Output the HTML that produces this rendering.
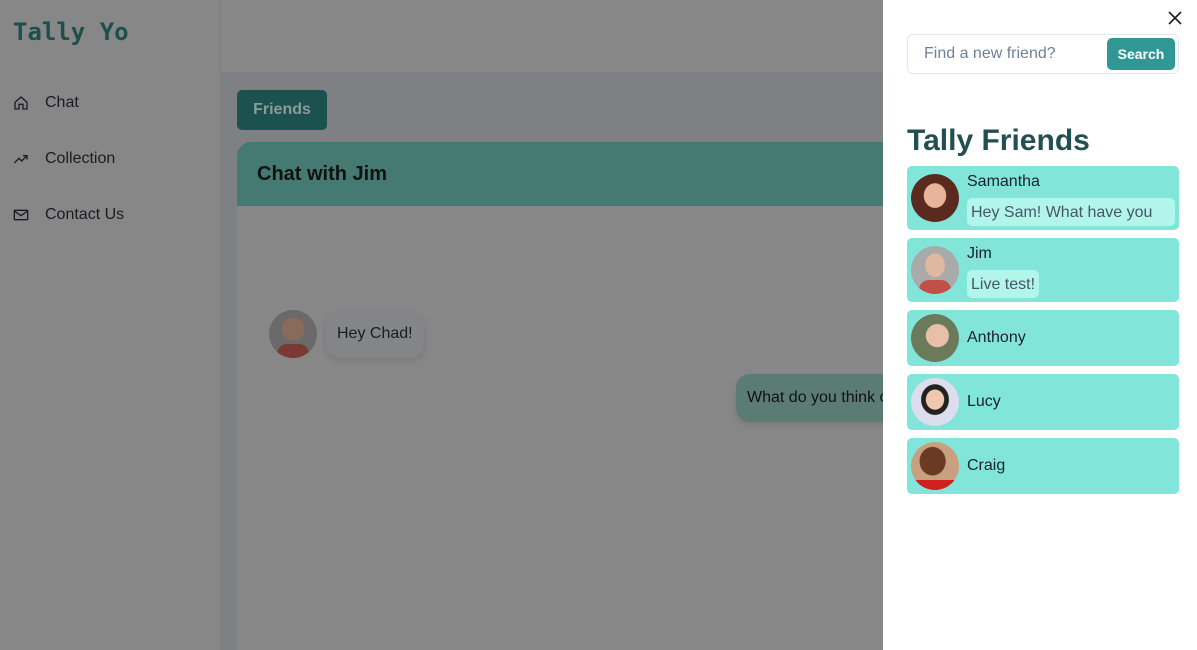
<!DOCTYPE html>
<html><head><meta charset="utf-8"><style>
*{box-sizing:border-box;margin:0;padding:0}
html{width:1197px;height:650px;overflow:hidden}
body{width:1197px;height:650px;overflow:hidden;font-family:"Liberation Sans",sans-serif;background:#7f8084;position:relative}
.side{position:absolute;left:0;top:0;width:221px;height:650px;background:#878787;border-right:1px solid #7d7f84}
.logo{position:absolute;left:13px;top:18px;font-family:"DejaVu Sans Mono",monospace;font-weight:bold;font-size:24px;color:#1d4f4c}
.nav{position:absolute;left:13px;display:flex;align-items:center;font-size:16px;color:#1a1c20}
.nav svg{width:16px;height:16px;margin-right:16px}
.top{position:absolute;left:221px;top:0;width:662px;height:73px;background:#878787;border-bottom:1px solid #7d7f84}
.btn{position:absolute;left:237px;top:90px;width:90px;height:40px;background:#1b524f;border-radius:5px;color:#8c9a99;font-weight:bold;font-size:16px;line-height:40px;text-align:center}
.card{position:absolute;left:237px;top:142px;width:646px;height:508px;background:#878787;border-radius:14px 0 0 0;overflow:hidden}
.ch{height:64px;background:#447a72;font-weight:bold;font-size:20px;color:#111;padding:21px 20px}
.av{position:absolute;border-radius:50%;overflow:hidden}
.b1{position:absolute;left:326px;top:310px;width:98px;height:48px;background:#838589;border-radius:14px;font-size:16px;color:#1a1c20;line-height:48px;padding-left:11px;box-shadow:0 3px 6px rgba(0,0,0,.1)}
.b2{position:absolute;left:736px;top:374px;width:147px;height:48px;background:#5b7b75;border-radius:14px 0 0 14px;font-size:16px;color:#111;line-height:48px;padding-left:11px;white-space:nowrap;overflow:hidden;box-shadow:0 3px 6px rgba(0,0,0,.1)}
.panel{position:absolute;left:883px;top:0;width:314px;height:650px;background:#fff}
.search{position:absolute;left:24px;top:34px;width:272px;height:40px;border:1px solid #e2e8f0;border-radius:6px}
.search span{position:absolute;left:16px;top:10px;font-size:16px;color:#718096}
.sb{position:absolute;right:3px;top:3px;width:68px;height:32px;background:#319795;border-radius:5px;color:#fff;font-weight:bold;font-size:14px;text-align:center;line-height:32px}
h2{position:absolute;left:24px;top:124px;font-size:30px;color:#234e52;font-weight:bold}
.f{position:absolute;left:24px;width:272px;background:#81e6d9;border-radius:5px}
.f .av{left:4px;width:48px;height:48px}
.n{position:absolute;left:60px;font-size:16px;color:#1a202c}
.m{position:absolute;left:60px;top:32px;height:28px;background:#b2f5ea;border-radius:5px;font-size:16px;color:#4a5568;line-height:30px;padding:0 4px;white-space:nowrap}
</style></head><body>
<div class="side">
<div class="logo">Tally Yo</div>
<div class="nav" style="top:94px"><svg viewBox="0 0 24 24" fill="none" stroke="#1a1c20" stroke-width="2"><path d="M3 11l9-8 9 8v10H15v-7H9v7H3z"/></svg>Chat</div>
<div class="nav" style="top:150px"><svg viewBox="0 0 24 24" fill="none" stroke="#1a1c20" stroke-width="2"><path d="M2 18l7-7 4 4 8-8M15 7h6v6"/></svg>Collection</div>
<div class="nav" style="top:206px"><svg viewBox="0 0 24 24" fill="none" stroke="#1a1c20" stroke-width="2"><rect x="2" y="5" width="20" height="14" rx="1"/><path d="M2 6l10 7 10-7"/></svg>Contact Us</div>
</div>
<div class="top"></div>
<div class="btn">Friends</div>
<div class="card"><div class="ch">Chat with Jim</div></div>
<div class="av" style="left:269px;top:310px;width:48px;height:48px;background:radial-gradient(circle at 50% 40%,#8a6a5a 0 30%,#6a6a6a 31%)"><div style="position:absolute;bottom:0;left:8px;width:32px;height:14px;background:#7a3a33;border-radius:10px 10px 0 0"></div></div>
<div class="b1">Hey Chad!</div>
<div class="b2">What do you think of</div>
<div class="panel">
<svg style="position:absolute;left:285px;top:11px" width="14" height="14" viewBox="0 0 14 14" stroke="#1a202c" stroke-width="1.6"><path d="M1 1l12 12M13 1L1 13"/></svg>
<div class="search"><span>Find a new friend?</span><div class="sb">Search</div></div>
<h2>Tally Friends</h2>
<div class="f" style="top:166px;height:64px"><div class="av" style="top:8px;background:radial-gradient(ellipse at 50% 45%,#e8b49a 0 32%,#5a2a1e 34%)"></div><div class="n" style="top:7px">Samantha</div><div class="m" style="width:208px">Hey Sam! What have you</div></div>
<div class="f" style="top:238px;height:64px"><div class="av" style="top:8px;background:radial-gradient(ellipse at 50% 40%,#e0b8a0 0 28%,#aaa 30%)"><div style="position:absolute;bottom:0;left:8px;width:32px;height:14px;background:#c05048;border-radius:10px 10px 0 0"></div></div><div class="n" style="top:7px">Jim</div><div class="m">Live test!</div></div>
<div class="f" style="top:310px;height:56px"><div class="av" style="top:4px;background:radial-gradient(ellipse at 55% 45%,#e8c0a8 0 30%,#6a7a5a 32%)"></div><div class="n" style="top:19px">Anthony</div></div>
<div class="f" style="top:374px;height:56px"><div class="av" style="top:4px;background:radial-gradient(ellipse at 50% 45%,#f0c8b0 0 26%,#222 28% 40%,#dde 42%)"></div><div class="n" style="top:19px">Lucy</div></div>
<div class="f" style="top:438px;height:56px"><div class="av" style="top:4px;background:radial-gradient(ellipse at 45% 40%,#6a3a22 0 34%,#c8a080 36%)"><div style="position:absolute;bottom:0;left:0;width:48px;height:10px;background:#d02020"></div></div><div class="n" style="top:19px">Craig</div></div>
</div>
</body></html>
